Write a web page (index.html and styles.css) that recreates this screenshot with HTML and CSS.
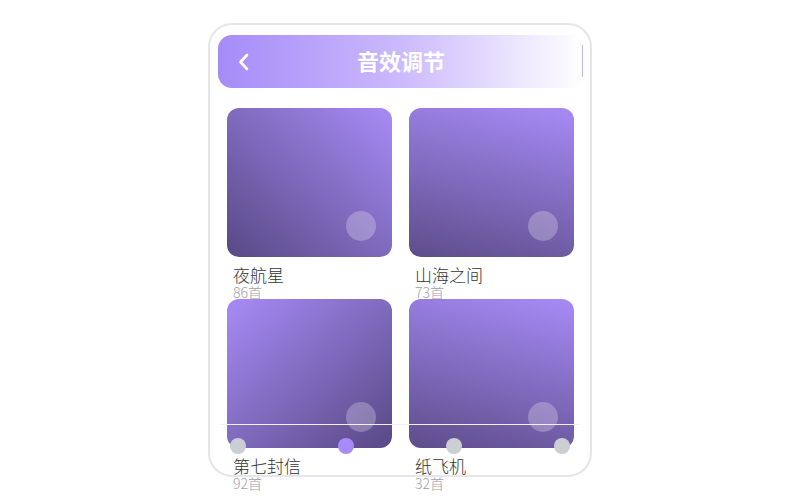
FILE: index.html
```html
<!DOCTYPE html>
<html lang="zh-CN">
<head>
<meta charset="UTF-8">
<meta name="viewport" content="width=device-width, initial-scale=1.0">
<title>音效调节</title>
<link rel="stylesheet" href="styles.css">
</head>
<body>
<div class="telefono">
    <div class="cabecera">
        <svg class="volver" width="14" height="20" viewBox="0 0 14 20">
            <path d="M10 3 L3.5 10 L10 17" fill="none" stroke="#fff" stroke-width="2.6" stroke-linecap="round" stroke-linejoin="round"/>
        </svg>
        <h1>音效调节</h1>
    </div>

    <div class="rejilla">
        <div class="tarjeta">
            <div class="portada portada-1"><span class="boton"></span></div>
            <div class="titulo">夜航星</div>
            <div class="cantidad">86首</div>
        </div>
        <div class="tarjeta">
            <div class="portada portada-2"><span class="boton"></span></div>
            <div class="titulo">山海之间</div>
            <div class="cantidad">73首</div>
        </div>
        <div class="tarjeta">
            <div class="portada portada-3"><span class="boton"></span></div>
            <div class="titulo">第七封信</div>
            <div class="cantidad">92首</div>
        </div>
        <div class="tarjeta">
            <div class="portada portada-4"><span class="boton"></span></div>
            <div class="titulo">纸飞机</div>
            <div class="cantidad">32首</div>
        </div>
    </div>

    <!-- deslizador encima de las tarjetas -->
    <div class="linea"></div>
    <div class="puntos">
        <span class="punto"></span>
        <span class="punto activo"></span>
        <span class="punto"></span>
        <span class="punto"></span>
    </div>
</div>
</body>
</html>
```

FILE: styles.css
```css
html, body {
    min-height: 500px;
}
body {
    font-family: "Noto Sans CJK SC", "Noto Sans", sans-serif;
    margin: 0;
    padding: 23px 0 0;
    box-sizing: border-box;
    background-color: #fff;
}
.telefono {
    position: relative;
    width: 372px;
    height: 440px;
    margin: 0 auto;
    border: 2px solid #e6e6ea;
    border-radius: 24px;
    padding: 10px 0 0 8px;
}
.cabecera {
    position: relative;
    display: flex;
    align-items: center;
    justify-content: center;
    width: 366px;
    height: 53px;
    border-radius: 14px;
    background: linear-gradient(90deg, #a68bf8 0%, #cbbafc 50%, #ffffff 100%);
}
.cabecera::after {
    content: "";
    position: absolute;
    right: 1px;
    top: 10px;
    width: 1px;
    height: 32px;
    background-color: #c4b3fb;
}
.volver {
    position: absolute;
    left: 19px;
    top: 17px;
}
.cabecera h1 {
    margin: -4px 0 0;
    font-size: 22px;
    font-weight: bold;
    color: #fff;
    line-height: 1;
}
.rejilla {
    display: grid;
    grid-template-columns: 165px 165px;
    column-gap: 17px;
    margin: 20px 0 0 9px;
}
.tarjeta {
    height: 191px;
}
.portada {
    position: relative;
    height: 149px;
    border-radius: 12px;
}
.portada-1 {
    background: linear-gradient(to bottom left, #a78bf6, #584985);
}
.portada-2 {
    background: linear-gradient(195deg, #a78bf6, #5d4d8b);
}
.portada-3 {
    background: linear-gradient(to bottom right, #a78bf6, #584985);
}
.portada-4 {
    background: linear-gradient(195deg, #a78bf6, #5d4d8b);
}
.boton {
    position: absolute;
    right: 16px;
    bottom: 16px;
    width: 30px;
    height: 30px;
    border-radius: 50%;
    background-color: rgba(255, 255, 255, 0.25);
}
.titulo {
    margin-top: 8px;
    padding-left: 6px;
    font-size: 17px;
    font-weight: 300;
    line-height: 20px;
    color: #333;
}
.cantidad {
    padding-left: 6px;
    font-size: 14px;
    font-weight: 300;
    line-height: 14px;
    color: #a0a0a8;
}
.linea {
    position: absolute;
    left: 10px;
    top: 399px;
    width: 360px;
    height: 1px;
    background-color: #f2f1f6;
}
.puntos {
    position: absolute;
    left: 20px;
    top: 413px;
    display: flex;
    gap: 92px;
}
.punto {
    width: 16px;
    height: 16px;
    border-radius: 50%;
    background-color: #cbced3;
}
.punto.activo {
    background-color: #a78bfa;
}
```
